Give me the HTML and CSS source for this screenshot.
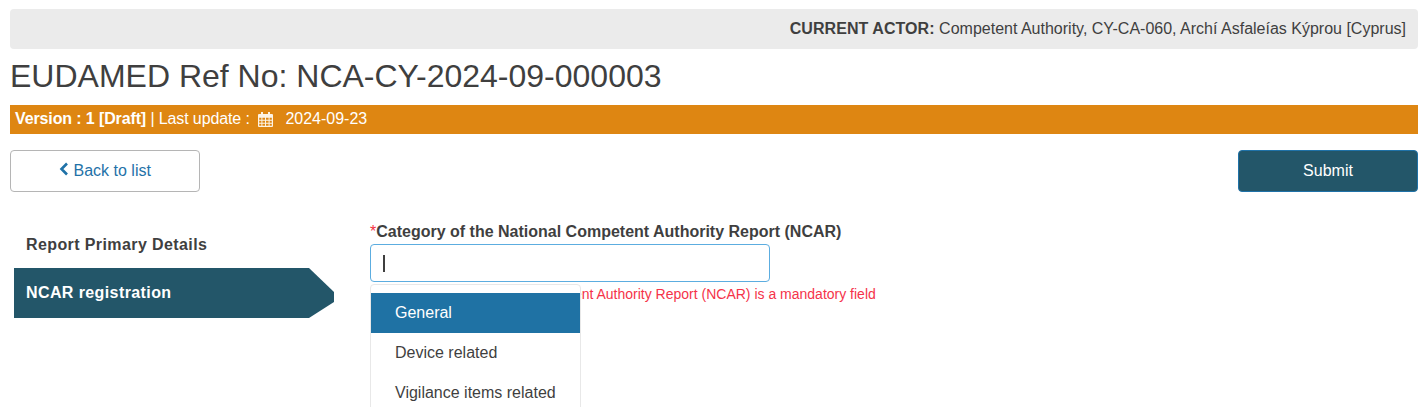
FILE: index.html
```html
<!DOCTYPE html>
<html lang="en">
<head>
  <meta charset="UTF-8" />
  <title>EUDAMED - NCAR</title>
  <link rel="stylesheet" href="styles.css">
</head>
<body>
  <div class="actor-bar">
    <b>CURRENT ACTOR:</b> Competent Authority, CY-CA-060, Archí Asfaleías Kýprou [Cyprus]
  </div>

  <h1>EUDAMED Ref No: NCA-CY-2024-09-000003</h1>

  <div class="version-bar">
    <b>Version : 1 [Draft]</b> | Last update :
    <svg class="cal-icon" width="15" height="16" viewBox="0 0 15 16">
      <path fill="#fdf3e4" fill-rule="evenodd" d="M1 3h2V1h2v2h5V1h2v2h2a1 1 0 0 1 1 1v11a1 1 0 0 1-1 1H1a1 1 0 0 1-1-1V4a1 1 0 0 1 1-1zM1.2 6.8v2h2.2v-2zm3.2 0v2h2.6v-2zm3.6 0v2h2.6v-2zm3.6 0v2h2.2v-2zM1.2 9.8v2h2.2v-2zm3.2 0v2h2.6v-2zm3.6 0v2h2.6v-2zm3.6 0v2h2.2v-2zM1.2 12.8v2h2.2v-2zm3.2 0v2h2.6v-2zm3.6 0v2h2.6v-2zm3.6 0v2h2.2v-2z"/>
    </svg>
    <span class="date">2024-09-23</span>
  </div>

  <div class="actions">
    <a class="btn btn-back">
      <svg width="10" height="14" viewBox="0 0 10 14"><path fill="none" stroke="#1f72a8" stroke-width="2.6" d="M8 1.5 2.5 7 8 12.5"/></svg>
      Back to list
    </a>
    <a class="btn btn-submit">Submit</a>
  </div>

  <div class="content">
    <ul class="steps">
      <li>Report Primary Details</li>
      <li class="active">NCAR registration</li>
    </ul>

    <div class="form-group">
      <label><span class="req">*</span>Category of the National Competent Authority Report (NCAR)</label>
      <div class="input-box"><span class="caret"></span></div>
      <p class="error">Category of the National Competent Authority Report (NCAR) is a mandatory field</p>
      <ul class="dropdown">
        <li class="selected">General</li>
        <li>Device related</li>
        <li>Vigilance items related</li>
      </ul>
    </div>
  </div>
</body>
</html>
```

FILE: styles.css
```css
html, body {
  height: 407px;
  overflow: hidden;
}

body {
  margin: 0;
  padding: 9px 7px 0 10px;
  background: #fff;
  color: #3f3f3f;
  font-family: "Liberation Sans", Arial, sans-serif;
  font-size: 16px;
}

.actor-bar {
  height: 40px;
  line-height: 39px;
  padding-right: 12px;
  background: #ebebeb;
  border-radius: 4px;
  text-align: right;
}

.actor-bar b {
  letter-spacing: 0.07px;
}

h1 {
  margin: 0;
  height: 56px;
  line-height: 55px;
  font-size: 32px;
  font-weight: normal;
}

.version-bar {
  height: 29px;
  line-height: 28px;
  padding-left: 5px;
  background: #de8612;
  color: #fff;
  letter-spacing: -0.12px;
}

.cal-icon {
  margin: 0 8px 0 4px;
  vertical-align: -3px;
}

.date {
  letter-spacing: 0;
}

.actions {
  display: flex;
  justify-content: space-between;
  margin-top: 16px;
}

.btn {
  box-sizing: border-box;
  height: 42px;
  line-height: 40px;
  border-radius: 4px;
  text-align: center;
}

.btn-back {
  width: 190px;
  border: 1px solid #b5b5b5;
  color: #1f72a8;
}

.btn-submit {
  width: 180px;
  border: 1px solid #1f72a8;
  background: #235669;
  color: #fff;
}

.content {
  display: flex;
  margin-top: 30px;
}

.steps {
  list-style: none;
  margin: 0 36px 0 4px;
  padding: 0;
  width: 320px;
  font-weight: bold;
  letter-spacing: 0.4px;
}

.steps li {
  height: 50px;
  line-height: 45px;
  padding-left: 12px;
  margin-bottom: -4px;
}

.steps li.active {
  background: #235669;
  color: #fff;
  line-height: 49px;
  clip-path: polygon(0 0, 295px 0, 100% 48%, 100% 68%, 295px 100%, 0 100%);
}

.form-group {
  position: relative;
  width: 400px;
}

label {
  display: block;
  height: 22px;
  line-height: 20px;
  font-weight: bold;
  white-space: nowrap;
}

.req {
  color: #f5333f;
  font-weight: normal;
}

.input-box {
  box-sizing: border-box;
  height: 38px;
  padding: 10px 12px 0;
  border: 1px solid #5cade0;
  border-radius: 4px;
}

.caret {
  display: block;
  width: 2px;
  height: 17px;
  background: #3f3f3f;
}

.error {
  margin: 4px 0 0;
  line-height: 16px;
  font-size: 14px;
  color: #f5334a;
  white-space: nowrap;
}

.dropdown {
  position: absolute;
  top: 62px;
  left: 0;
  width: 209px;
  margin: 0;
  padding: 8px 0 0;
  list-style: none;
  background: #fff;
  border: 1px solid #e8e8e8;
  border-radius: 4px;
}

.dropdown li {
  height: 40px;
  line-height: 40px;
  padding-left: 24px;
}

.dropdown li.selected {
  background: #1f72a4;
  color: #fff;
}
```
